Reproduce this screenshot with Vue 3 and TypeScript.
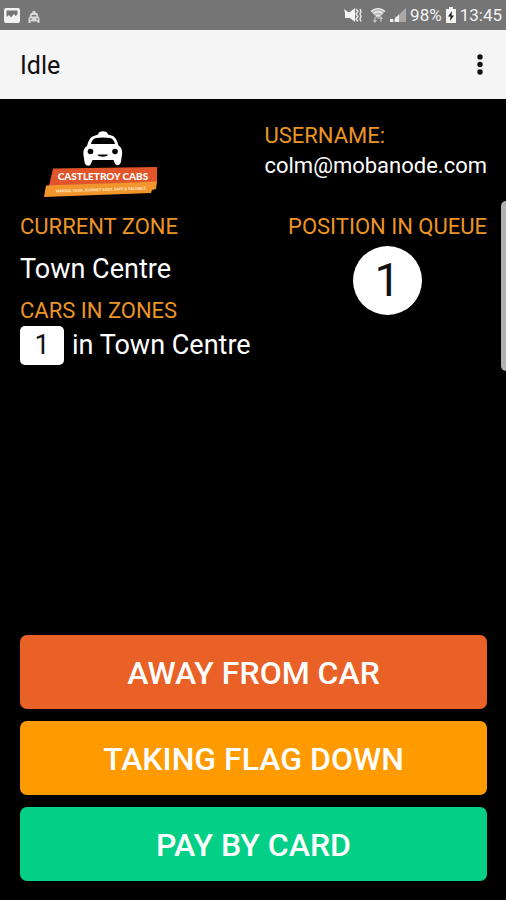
<script setup lang="ts">
interface Action {
  label: string
  tone: 'away' | 'flag' | 'pay'
}

interface ZoneCount {
  zone: string
  cars: number
}

const username = 'colm@mobanode.com'
const currentZone = 'Town Centre'
const queuePosition = 1
const zones: ZoneCount[] = [{ zone: 'Town Centre', cars: 1 }]
const actions: Action[] = [
  { label: 'AWAY FROM CAR', tone: 'away' },
  { label: 'TAKING FLAG DOWN', tone: 'flag' },
  { label: 'PAY BY CARD', tone: 'pay' },
]
</script>

<template>
  <div class="screen">
    <div class="status">
      <div class="status-group notices">
        <svg class="ic-picture" viewBox="0 0 16 15" aria-hidden="true">
          <path fill="#f2f2f2" fill-rule="evenodd" d="M2 0h12a2 2 0 0 1 2 2v11a2 2 0 0 1-2 2H2a2 2 0 0 1-2-2V2a2 2 0 0 1 2-2zM2.500 2.500V9l2.500-2 2 2.500L10 6l1.500 2 2-1.500v-4z" />
        </svg>
        <svg class="ic-cab" viewBox="0 0 12 12" aria-hidden="true">
          <path fill="#d8d8d8" fill-rule="evenodd" d="M4.500 1.500V0h3v1.500l2 1L10.500 6l1 1.500V12H9.500v-1.500h-7V12h-2V7.500l1-1.500 1-3.500zM4 4l-.5 1.500h5L8 4zM2 7.500v1.200h1.800V7.500zm6.200 0v1.200H10V7.500z" />
        </svg>
      </div>
      <div class="status-group">
        <svg class="ic-mute" viewBox="0 0 18 16" aria-hidden="true">
          <path d="M0 2l4 3h2l5-4v14l-5-4H1V6z" fill="#f4f4f4" />
          <path d="M12 2l2 2.500-2 2.500 2 2.500-2 2.500 2 2.500M16 2l1 2.500L16 7l1 2.500-1 2.500 1 2.500" fill="none" stroke="#e6e6e6" stroke-width="1.500" />
        </svg>
        <svg class="ic-wifi" viewBox="0 0 16 16" aria-hidden="true">
          <path d="M1 4.500C5 .5 11 .5 15 4.500L8 12z" fill="#bdbdbd" />
          <path d="M1 4.500C5 .5 11 .5 15 4.500M3.500 6.800c2.800-2.600 6.200-2.600 9 0M6 9.200c1.300-1.100 2.700-1.100 4 0" fill="none" stroke="#f0f0f0" stroke-width="1.200" />
          <path d="M5 10v5M3.500 13L5 15l1.500-2M11 15v-5M9.500 12L11 10l1.500 2" fill="none" stroke="#c4c4c4" stroke-width="1.200" />
        </svg>
        <svg class="ic-signal" viewBox="0 0 16 16" aria-hidden="true">
          <path d="M16 1v14H1z" fill="#a9a9a9" />
          <path d="M0 12h3v3H0zM5 11l4-3.500V15H5z" fill="#f0f0f0" />
        </svg>
        <span class="status-text">98%</span>
        <svg class="ic-battery" viewBox="0 0 10 16" aria-hidden="true">
          <path d="M3 0h4v2h3v14H0V2h3z" fill="#f7f7f7" />
          <path d="M6 4L2 9.500h2.500L4 14l4-5.500H5.500z" fill="#222" />
        </svg>
        <span class="status-text">13:45</span>
      </div>
    </div>

    <header class="bar">
      <h1 class="title">Idle</h1>
      <button class="more" type="button" aria-label="More options">
        <svg viewBox="0 0 6 22" aria-hidden="true">
          <circle cx="3" cy="3" r="2.700" />
          <circle cx="3" cy="10.500" r="2.700" />
          <circle cx="3" cy="18" r="2.700" />
        </svg>
      </button>
    </header>

    <main class="body">
      <section class="row">
        <svg class="logo" viewBox="0 0 114 68" role="img" aria-label="Castletroy Cabs">
          <path d="M9 37.500L113 36v15L5 55z" fill="#e0562a" />
          <path d="M2 54.500L113 50.500 112 58 108 59 107 62 0 66z" fill="#f2952c" />
          <path fill="#fff" fill-rule="evenodd" d="M54 3.500c0-4.500 10-4.500 10 0l5 1.500c3 1.500 4.500 6 5.500 9.500 3 2 4 4.500 3.500 9l-1 7c-.5 4.500-5.500 5-6.500 1L69.500 29h-21L47 32.500c-1 3.500-6 3-6.500-1.500l-1-7c-.5-4.500.5-7 3.500-9 1-3.500 2.500-8 5.500-9.500zM52 7c-3 .6-4.500 3.500-5 6h24C70.500 10.500 69 7.500 66 7c-4-.7-10-.7-14 0z" />
          <circle cx="46.500" cy="20.500" r="2.800" />
          <circle cx="71" cy="20.500" r="2.800" />
          <path d="M53.500 23.500h10.500c-.5 3-10 3-10.500 0z" />
          <text class="logo-name" x="59" y="49" text-anchor="middle">CASTLETROY CABS</text>
          <text class="logo-tag" x="57" y="60" text-anchor="middle" transform="rotate(-2 57 59)">MAKING YOUR JOURNEY EASY, SAFE &amp; RELIABLE</text>
        </svg>
        <div class="account">
          <h2 class="label">USERNAME:</h2>
          <p class="email">{{ username }}</p>
        </div>
      </section>

      <section class="row">
        <div>
          <h2 class="label">CURRENT ZONE</h2>
          <p class="zone">{{ currentZone }}</p>
          <h2 class="label">CARS IN ZONES</h2>
          <ul class="zones">
            <li v-for="item in zones" :key="item.zone" class="zone-item">
              <span class="count">{{ item.cars }}</span>
              <span>in {{ item.zone }}</span>
            </li>
          </ul>
        </div>
        <div class="queue">
          <h2 class="label">POSITION IN QUEUE</h2>
          <p class="position">{{ queuePosition }}</p>
        </div>
      </section>

      <div class="actions">
        <button v-for="action in actions" :key="action.label" type="button" class="action" :class="action.tone">
          {{ action.label }}
        </button>
      </div>
    </main>

    <div class="edge-handle"></div>
  </div>
</template>

<style>
body {
  margin: 0;
  background: #000;
}
</style>

<style scoped>
.screen {
  position: relative;
  display: flex;
  flex-direction: column;
  min-height: 100vh;
  background: #000;
  color: #fff;
  font-family: Roboto, 'Liberation Sans', sans-serif;
}

h1,
h2,
p,
ul {
  margin: 0;
  padding: 0;
  font-weight: 400;
}

.status {
  display: flex;
  justify-content: space-between;
  align-items: center;
  height: 30px;
  padding: 0 4px;
  background: #757575;
}

.status-group {
  display: flex;
  align-items: center;
  gap: 4px;
}

.notices {
  gap: 8px;
}

.status-text {
  font-size: 17px;
  line-height: 30px;
  color: #f2f2f2;
}

.ic-picture {
  width: 16px;
  height: 15px;
}

.ic-cab {
  width: 12px;
  height: 12px;
  margin-top: 4px;
}

.ic-mute {
  width: 18px;
  height: 16px;
  margin-right: 4px;
}

.ic-wifi,
.ic-signal {
  width: 16px;
  height: 16px;
}

.ic-battery {
  width: 10px;
  height: 16px;
}

.bar {
  display: flex;
  justify-content: space-between;
  align-items: center;
  height: 69px;
  padding: 0 12px 0 20px;
  background: #f5f5f5;
  color: #111;
}

.title {
  padding-top: 2px;
  font-size: 25px;
  line-height: 32px;
}

.more {
  display: grid;
  place-items: center;
  width: 28px;
  height: 40px;
  padding: 0;
  border: 0;
  background: none;
}

.more svg {
  width: 6px;
  height: 22px;
  fill: #111;
}

.body {
  display: flex;
  flex: 1;
  flex-direction: column;
  padding: 22px 19px 19px 20px;
}

.row {
  display: flex;
  justify-content: space-between;
  align-items: flex-start;
}

.logo {
  width: 114px;
  height: 68px;
  margin: 10px 0 13px 24px;
}

.logo-name {
  fill: #fff;
  font-family: Lato, sans-serif;
  font-size: 10px;
  font-weight: 900;
}

.logo-tag {
  fill: #ffe8c8;
  font-size: 4px;
  font-weight: 700;
}

.label {
  font-size: 22px;
  line-height: 30px;
  color: #ea9526;
}

.email {
  font-size: 22px;
  line-height: 30px;
}

.zone {
  font-size: 27px;
  line-height: 54px;
}

.zones {
  list-style: none;
}

.zone-item {
  display: flex;
  align-items: center;
  gap: 8px;
  font-size: 27px;
  line-height: 39px;
}

.count {
  width: 44px;
  border-radius: 5px;
  background: #fff;
  color: #111;
  text-align: center;
}

.queue {
  display: flex;
  flex-direction: column;
  align-items: center;
  gap: 4px;
}

.position {
  width: 69px;
  border-radius: 50%;
  background: #fff;
  color: #111;
  font-size: 46px;
  line-height: 69px;
  text-align: center;
}

.actions {
  display: flex;
  flex-direction: column;
  gap: 12px;
  margin-top: auto;
}

.action {
  height: 74px;
  padding: 2px 16px 0;
  border: 0;
  border-radius: 7px;
  color: #fff;
  font-family: inherit;
  font-size: 32px;
  font-weight: 500;
}

.away {
  background: #e96126;
}

.flag {
  background: #ff9a00;
}

.pay {
  background: #03d086;
}

.edge-handle {
  position: absolute;
  top: 201px;
  right: 0;
  width: 5px;
  height: 170px;
  border-radius: 5px 0 0 5px;
  background: #b0b0b0;
}
</style>
